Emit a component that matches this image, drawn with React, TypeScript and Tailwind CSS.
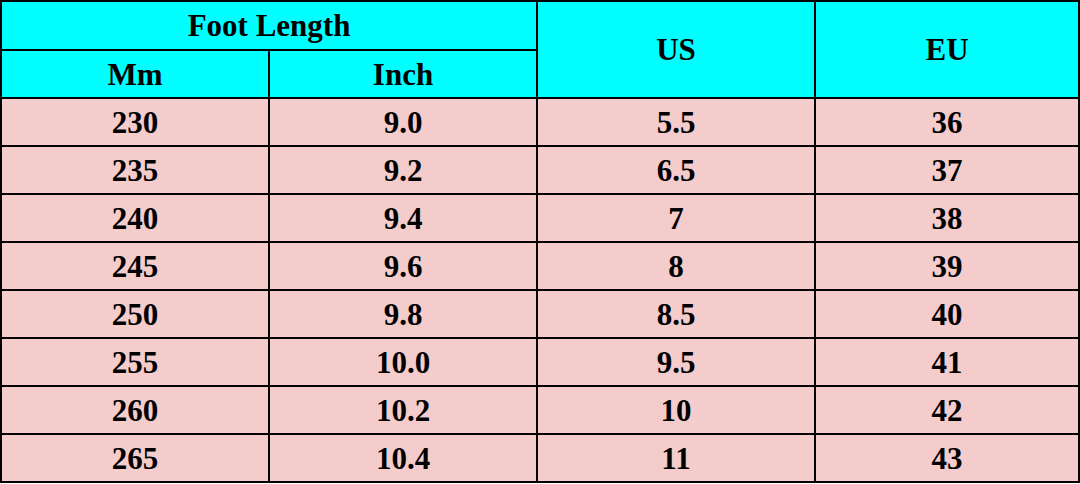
import React from 'react';

const rows = [
    ['230', '9.0', '5.5', '36'],
    ['235', '9.2', '6.5', '37'],
    ['240', '9.4', '7', '38'],
    ['245', '9.6', '8', '39'],
    ['250', '9.8', '8.5', '40'],
    ['255', '10.0', '9.5', '41'],
    ['260', '10.2', '10', '42'],
    ['265', '10.4', '11', '43'],
];

const App: React.FC = () => {
    return (
        <div className="bg-white w-[1080px] h-[484px] font-['Liberation_Serif',serif] font-bold text-black text-[31px]">
            <table className="border-collapse w-[1078px] table-fixed">
                <colgroup>
                    <col className="w-[268px]" />
                    <col className="w-[268px]" />
                    <col className="w-[278px]" />
                    <col className="w-[264px]" />
                </colgroup>
                <thead className="bg-[#00ffff]">
                    <tr className="h-[49px]">
                        <th colSpan={2} className="border-2 border-black p-0 leading-none">Foot Length</th>
                        <th rowSpan={2} className="border-2 border-black p-0 leading-none">US</th>
                        <th rowSpan={2} className="border-2 border-black p-0 leading-none">EU</th>
                    </tr>
                    <tr className="h-[48px]">
                        <th className="border-2 border-black p-0 leading-none">Mm</th>
                        <th className="border-2 border-black p-0 leading-none">Inch</th>
                    </tr>
                </thead>
                <tbody className="bg-[#f4cccc]">
                    {rows.map((r, i) => (
                        <tr key={i} className="h-[48px]">
                            {r.map((c, j) => (
                                <td key={j} className="border-2 border-black p-0 text-center leading-none">{c}</td>
                            ))}
                        </tr>
                    ))}
                </tbody>
            </table>
        </div>
    );
};

export default App;
